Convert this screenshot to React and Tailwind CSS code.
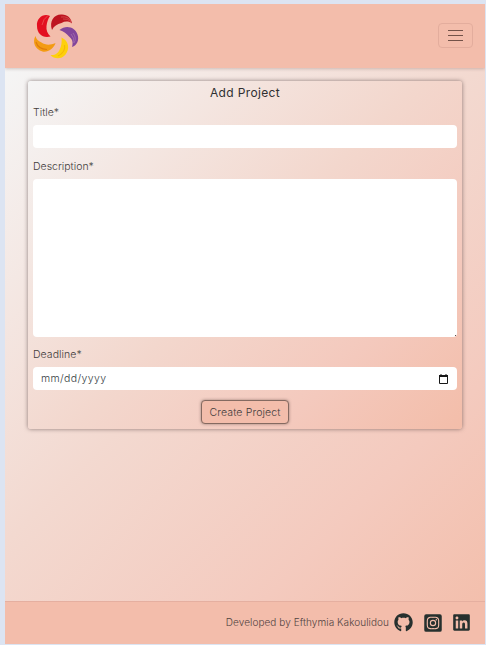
import React from 'react';
import { FaGithub, FaInstagramSquare, FaLinkedin } from 'react-icons/fa';

function Logo() {
  return (
    <svg width="48" height="48" viewBox="32 12 48 48" aria-label="Logo">
      <path d="M50 16C44 12.500 36 18 37 26C37 34 43 38.500 50.500 36.500C47.500 34 46 30 46.500 26C47 22 48 19 50 16Z" fill="#e30f20" />
      <path d="M48 15.500Q43 19 42 25" stroke="#f38379" strokeWidth=".5" fill="none" />
      <path d="M52 30C49 21 54 14.500 61 14.500C67 14 71.500 18 72 23.500C69 21 65 21 61.500 23C57 24 54 26 52 30Z" fill="#bd1520" />
      <path d="M61 17Q68 16 71 21M63 19Q68 18 71 22" stroke="#e77970" strokeWidth=".5" fill="none" />
      <path d="M59.500 30C66 24.500 75 27 77.500 34.500C79.500 40 77 45.500 72 47C73.500 42 72 39 69 36.500C66.500 33.500 64 31.500 59.500 30Z" fill="#82459b" />
      <path d="M73 33Q77 38 74 43M71 34Q75 38 73 43" stroke="#b98abb" strokeWidth=".5" fill="none" />
      <path d="M61.500 37.500C69 41 70 49 65.500 54.500C61 60 54 59 50.500 55C55.500 55.500 58 53 59.500 50C61.500 46 62 42 61.500 37.500Z" fill="#fed00b" />
      <path d="M64.500 45Q66 52 58 56" stroke="#f6b708" strokeWidth="1.200" fill="none" />
      <path d="M35.500 36C32 42 35 49.500 42.500 51.500C48 52.500 53.500 49 55.500 43C50 45.500 45 45 41.500 42.500C38 41 36 39 35.500 36Z" fill="#f39b13" />
      <path d="M36 42Q38 49 47 49.500" stroke="#df7b0b" strokeWidth="1.100" fill="none" />
    </svg>
  );
}

function Header() {
  return (
    <header className="relative flex h-[64px] shrink-0 items-center justify-between bg-[#f3bdab] pl-[27px] pr-[12px] shadow-[0_1px_3px_rgba(90,60,50,0.25)]">
      <Logo />
      <button aria-label="Open menu" className="mb-px flex h-[25px] w-[35px] flex-col items-center justify-center gap-[4px] rounded-[4px] border border-[#e3ad9d]">
        <span className="h-px w-[15px] bg-[#735248]" />
        <span className="h-px w-[15px] bg-[#735248]" />
        <span className="h-px w-[15px] bg-[#735248]" />
      </button>
    </header>
  );
}

function ProjectForm() {
  return (
    <form className="mx-[23px] mt-[13px] flex h-[348px] flex-col rounded-[3px] bg-[linear-gradient(135deg,#f5f5f5_0%,#f3d7cd_50%,#f4c9bd_77%,#f3bda9_100%)] px-[5px] shadow-[0_0_4px_rgba(70,50,50,0.6)]">
      <h1 className="mt-[3px] h-[18px] text-center text-[12px] leading-[18px] font-normal tracking-[0.35px] text-[#2f3031]">Add Project</h1>
      <label htmlFor="title" className="mt-[3px] h-[16px] text-[10.5px] leading-[16px]">Title*</label>
      <input id="title" className="mt-[4px] h-[23px] rounded-[4px] bg-white px-2 outline-none" />
      <label htmlFor="description" className="mt-[11px] h-[16px] text-[10.5px] leading-[16px]">Description*</label>
      <div className="relative mt-[4px] h-[158px]">
        <textarea id="description" className="block size-full resize-none rounded-[4px] bg-white px-2 outline-none" />
        <span className="absolute right-px bottom-px size-px bg-[#555]" />
      </div>
      <label htmlFor="deadline" className="mt-[10px] h-[16px] text-[10.5px] leading-[16px] tracking-[0.06px]">Deadline*</label>
      <div id="deadline" className="mt-[4px] flex h-[23px] items-center justify-between rounded-[4px] bg-white pt-px pr-[9px] pl-[8px] text-[10.5px] text-[#343c42]">
        <span className="tracking-[0.38px]">mm/dd/yyyy</span>
        <svg width="9" height="10" viewBox="0 0 9 10" fill="none" stroke="#181818">
          <path d="M.5 2.5V9.5H8.5V2.5Z" />
          <path d="M0 2H9" strokeWidth="2" />
          <path d="M2 0V2M7 0V2" />
        </svg>
      </div>
      <button type="button" className="mt-[10px] h-[24px] w-[88px] self-center rounded-[4px] border border-[#856a61] bg-[#f3bdab] pt-px text-[10.5px] font-light tracking-[0.14px] whitespace-nowrap shadow-[0_0_3px_rgba(60,40,35,0.5)]">Create Project</button>
    </form>
  );
}

function Footer() {
  return (
    <footer className="mt-auto flex h-[43px] shrink-0 items-center justify-end border-t border-[#e5afa0] bg-[#f3bdab] pr-[14px] pb-px text-[#26302e]">
      <span className="mr-[5px] text-[10px] tracking-[0.06px] whitespace-nowrap text-[#51423f]">Developed by Efthymia Kakoulidou</span>
      <FaGithub className="mr-[10px] size-[19px]" />
      <FaInstagramSquare className="mr-[9px] size-[20px]" />
      <FaLinkedin className="size-[19px]" />
    </footer>
  );
}

export default function App() {
  return (
    <div className="h-[645px] w-[486px] overflow-hidden bg-[#dce4f2] pt-[4px] pr-px pb-px pl-[5px] font-[Inter,sans-serif] font-light text-[#423c3b]">
      <main className="flex h-full flex-col overflow-hidden">
        <Header />
        <div className="flex grow flex-col bg-[linear-gradient(135deg,#f5f5f5_0%,#f3d9d0_45%,#f4cabe_75%,#f3bda9_100%)]">
          <ProjectForm />
          <Footer />
        </div>
      </main>
    </div>
  );
}
